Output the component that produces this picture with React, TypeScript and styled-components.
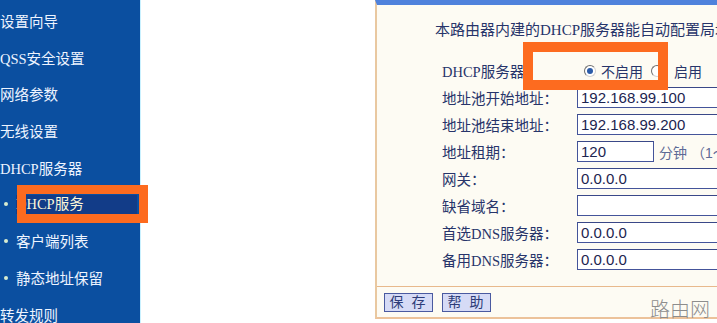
import styled, { createGlobalStyle } from 'styled-components';

const GlobalStyle = createGlobalStyle`
  html, body {
    margin: 0;
    padding: 0;
    background: #ffffff;
    overflow: hidden;
  }
`;

const Page = styled.div`
  position: relative;
  width: 717px;
  height: 323px;
  overflow: hidden;
  display: flex;
  flex-direction: row;
  font-family: 'Liberation Serif', 'Noto Sans CJK SC', serif;
  font-size: 14px;
`;

const Sidebar = styled.ul`
  flex: 0 0 140px;
  margin: 0;
  padding: 2px 0 0;
  list-style: none;
  background: #0b4fa0;
`;

const MenuItem = styled.li<{ sub?: boolean }>`
  height: 36.75px;
  display: flex;
  align-items: center;
  padding-left: ${(p) => (p.sub ? '16px' : '0')};
  color: #eef4ff;
  font-size: 14.5px;
  white-space: nowrap;
  position: relative;

  &::before {
    content: '';
    display: ${(p) => (p.sub ? 'block' : 'none')};
    position: absolute;
    left: 4px;
    top: 50%;
    width: 4px;
    height: 4px;
    margin-top: -2px;
    border-radius: 50%;
    background: #d8ecd0;
  }
`;

const Selected = styled.span`
  display: inline-block;
  width: 121px;
  height: 19px;
  line-height: 19px;
  background: #123c88;
  color: #fbf7d8;
`;

const Spacer = styled.div`
  flex: 0 0 234px;
  border-left: 1px solid #c9f1ff;
  background: #ffffff;
`;

const Panel = styled.section`
  flex: 0 0 440px;
  align-self: flex-start;
  border-top: 5px solid #4f82dc;
  border-left: 2px solid #e9c8a0;
  border-bottom: 2px solid #ecc29a;
  background: #fdfbf3;
  color: #27346a;
`;

const Intro = styled.p`
  margin: 0;
  padding: 15px 0 0 58px;
  font-size: 15px;
  line-height: 20px;
  white-space: nowrap;
`;

const Form = styled.div`
  display: grid;
  grid-template-columns: 135px 1fr;
  grid-auto-rows: 27px;
  align-items: center;
  padding: 17px 0 0 65px;
`;

const Label = styled.span`
  white-space: nowrap;
  font-size: 14.5px;
`;

const Field = styled.div`
  display: flex;
  align-items: center;
  white-space: nowrap;
`;

const Input = styled.div<{ w?: number }>`
  box-sizing: border-box;
  width: ${(p) => (p.w ? `${p.w}px` : '240px')};
  height: 21px;
  line-height: 19px;
  padding-left: 3px;
  border: 1px solid #44549a;
  border-top-color: #3a4888;
  background: #ffffff;
  font-family: 'Liberation Sans', Arial, sans-serif;
  font-size: 15px;
  color: #1c2450;
`;

const Unit = styled.span`
  margin-left: 5px;
  font-family: 'Liberation Sans', 'Noto Sans CJK SC', sans-serif;
  color: #5d6a96;
`;

const RadioGroup = styled.div`
  display: flex;
  align-items: center;
  padding-left: 7px;
  font-family: 'Liberation Sans', 'Noto Sans CJK SC', sans-serif;
  color: #27346a;
`;

const Radio = styled.span<{ checked?: boolean }>`
  box-sizing: border-box;
  width: 12px;
  height: 12px;
  border-radius: 50%;
  border: 1px solid #d2d2d2;
  border-top-color: #6e6e6e;
  border-left-color: #6e6e6e;
  background: #ffffff;
  margin-right: ${(p) => (p.checked ? '5px' : '11px')};
  display: flex;
  align-items: center;
  justify-content: center;

  &::after {
    content: '';
    display: ${(p) => (p.checked ? 'block' : 'none')};
    width: 6px;
    height: 6px;
    border-radius: 50%;
    background: #2b5ba8;
  }
`;

const RadioText = styled.span`
  margin-right: 8px;
`;

const Footer = styled.div`
  margin-top: 13px;
  border-top: 1px solid #e8b98c;
  padding: 6px 0 5px 7px;
  display: flex;
  gap: 9px;
`;

const Button = styled.button`
  box-sizing: border-box;
  height: 19px;
  width: 49px;
  padding: 0;
  border: 1px solid #4a5aa0;
  background: #d6dbf6;
  color: #2d3c78;
  font-family: 'Liberation Sans', 'Noto Sans CJK SC', sans-serif;
  font-size: 14px;
  line-height: 17px;
  letter-spacing: 2px;
`;

const Highlight = styled.div<{ x: number; y: number; w: number; h: number; t: number }>`
  position: absolute;
  box-sizing: border-box;
  left: ${(p) => p.x}px;
  top: ${(p) => p.y}px;
  width: ${(p) => p.w}px;
  height: ${(p) => p.h}px;
  border: ${(p) => p.t}px solid #fd6b1f;
  pointer-events: none;
`;

const Watermark = styled.span`
  position: absolute;
  left: 650px;
  top: 297px;
  font-family: 'Noto Sans CJK SC', sans-serif;
  font-weight: 300;
  font-size: 20px;
  line-height: 24px;
  color: #8d8d8d;
`;

const menu = [
  { text: '设置向导' },
  { text: 'QSS安全设置' },
  { text: '网络参数' },
  { text: '无线设置' },
  { text: 'DHCP服务器' },
  { text: 'DHCP服务', sub: true, selected: true },
  { text: '客户端列表', sub: true },
  { text: '静态地址保留', sub: true },
  { text: '转发规则' },
];

const fields = [
  { label: '地址池开始地址：', value: '192.168.99.100' },
  { label: '地址池结束地址：', value: '192.168.99.200' },
  { label: '地址租期：', value: '120', width: 77, unit: '分钟 （1～2880分钟）' },
  { label: '网关：', value: '0.0.0.0' },
  { label: '缺省域名：', value: '' },
  { label: '首选DNS服务器：', value: '0.0.0.0' },
  { label: '备用DNS服务器：', value: '0.0.0.0' },
];

export default function App() {
  return (
    <>
      <GlobalStyle />
      <Page>
        <Sidebar>
          {menu.map((m) => (
            <MenuItem key={m.text} sub={m.sub}>
              {m.selected ? <Selected>{m.text}</Selected> : m.text}
            </MenuItem>
          ))}
        </Sidebar>
        <Spacer />
        <Panel>
          <Intro>本路由器内建的DHCP服务器能自动配置局域网中各计算机的TCP/IP协议。</Intro>
          <Form>
            <Label>DHCP服务器：</Label>
            <RadioGroup>
              <Radio checked />
              <RadioText>不启用</RadioText>
              <Radio />
              <RadioText>启用</RadioText>
            </RadioGroup>
            {fields.map((f) => (
              <>
                <Label key={f.label}>{f.label}</Label>
                <Field key={f.label + '-v'}>
                  <Input w={f.width}>{f.value}</Input>
                  {f.unit && <Unit>{f.unit}</Unit>}
                </Field>
              </>
            ))}
          </Form>
          <Footer>
            <Button>保 存</Button>
            <Button>帮 助</Button>
          </Footer>
        </Panel>
        <Highlight x={17} y={185} w={131} h={38} t={9} />
        <Highlight x={523} y={42} w={145} h={48} t={10} />
        <Watermark>路由网</Watermark>
      </Page>
    </>
  );
}
